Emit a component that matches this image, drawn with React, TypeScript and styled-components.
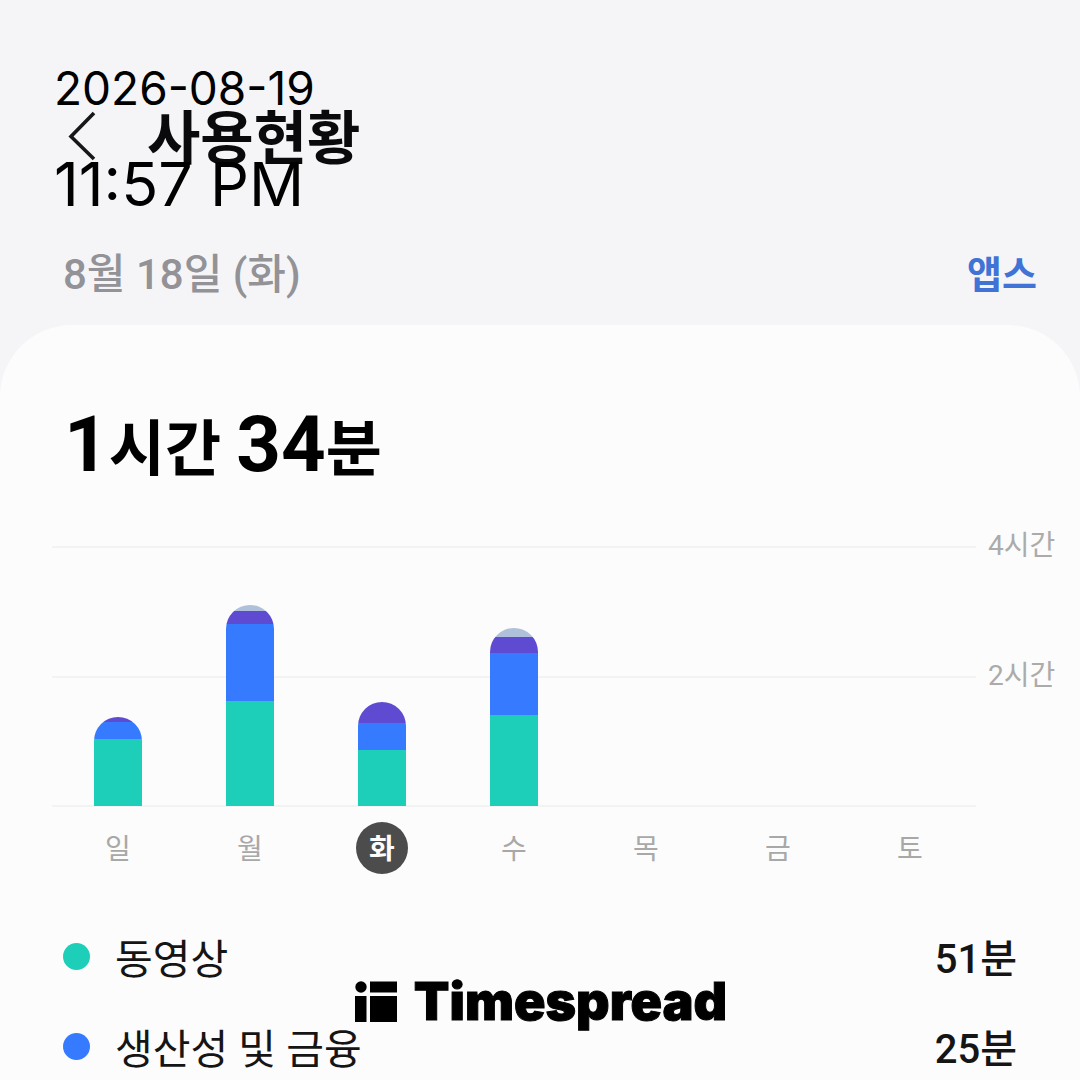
import React from "react";
import styled, { createGlobalStyle } from "styled-components";

const GlobalStyle = createGlobalStyle`
  *, *::before, *::after { box-sizing: border-box; }
  body {
    margin: 0;
    background: #f5f5f8;
    font-family: Roboto, "Noto Sans CJK KR", sans-serif;
    color: #000;
  }
  button { border: 0; padding: 0; background: none; font: inherit; color: inherit; cursor: pointer; }
  h1, p, ul, time { margin: 0; padding: 0; }
`;

const colors = {
  video: "#1dcfb8",
  work: "#367bff",
  social: "#5f4bd1",
  other: "#afc0da",
};

type Category = keyof typeof colors;

const Page = styled.main`
  position: relative;
  display: flex;
  flex-direction: column;
  height: 100vh;
  overflow: hidden;
`;

const Header = styled.header`
  display: flex;
  align-items: center;
  gap: 43px;
  height: 60px;
  margin-top: 106px;
  padding: 0 60px;
`;

const BackButton = styled.button`
  display: flex;
  align-items: center;
  justify-content: center;
  width: 44px;
  height: 60px;
`;

const Title = styled.h1`
  padding-top: 6px;
  font-size: 58px;
  font-weight: 700;
  line-height: 60px;
  color: #0a0a0c;
`;

const DateBar = styled.div`
  display: flex;
  align-items: center;
  justify-content: space-between;
  height: 60px;
  margin: 79px 43px 20px 63px;
`;

const DateLabel = styled.p`
  font-size: 42px;
  font-weight: 500;
  line-height: 60px;
  color: #929297;
`;

const AppsButton = styled.button`
  font-size: 38px;
  font-weight: 700;
  line-height: 60px;
  color: #4073d5;
`;

const Card = styled.section`
  flex: 1;
  min-height: 0;
  padding-top: 80px;
  border-radius: 72px 72px 0 0;
  background: #fcfcfc;
`;

const Total = styled.p`
  height: 80px;
  padding: 0 64px;
  font-size: 61px;
  font-weight: 700;
  line-height: 80px;
`;

const Digits = styled.span`
  font-size: 78px;
  line-height: 80px;
`;

const Chart = styled.div`
  display: grid;
  grid-template-columns: 1fr 92px;
  column-gap: 12px;
  margin-top: 61px;
  padding-left: 52px;
`;

const GridLines = styled.div`
  grid-area: 1 / 1;
  display: grid;
  grid-template-rows: 1fr 1fr;
  height: 261px;
  border-bottom: 2px solid #f3f3f3;
`;

const GridLine = styled.div`
  border-top: 2px solid #f3f3f3;
`;

const Bars = styled.div`
  grid-area: 1 / 1;
  display: grid;
  grid-template-columns: repeat(7, 1fr);
  align-items: end;
  justify-items: center;
  height: 260px;
`;

const Bar = styled.div`
  display: flex;
  flex-direction: column-reverse;
  width: 48px;
  border-radius: 24px 24px 0 0;
  overflow: hidden;
`;

const Segment = styled.div<{ $kind: Category }>`
  background: ${(p) => colors[p.$kind]};
`;

const Scale = styled.div`
  grid-area: 1 / 2;
  display: grid;
  grid-template-rows: 1fr 1fr;
  height: 260px;
`;

const ScaleLabel = styled.span`
  margin-top: -20px;
  font-size: 28px;
  line-height: 40px;
  color: #ababab;
`;

const Days = styled.div`
  grid-area: 2 / 1;
  display: grid;
  grid-template-columns: repeat(7, 1fr);
  justify-items: center;
  margin-top: 15px;
`;

const Day = styled.button<{ $active: boolean }>`
  width: 52px;
  height: 52px;
  padding-top: 4px;
  border-radius: 50%;
  background: ${(p) => (p.$active ? "#4c4c4c" : "transparent")};
  color: ${(p) => (p.$active ? "#fcfcfc" : "#a8a8a8")};
  font-size: 28px;
  font-weight: ${(p) => (p.$active ? 700 : 400)};
  line-height: 48px;
`;

const List = styled.ul`
  margin-top: 37px;
  list-style: none;
`;

const Row = styled.li`
  display: flex;
  align-items: center;
  height: 90px;
  padding: 0 63px;
  font-size: 41px;
  line-height: 60px;
  color: #151515;
`;

const Dot = styled.span<{ $kind: Category }>`
  width: 27px;
  height: 27px;
  margin-right: 25px;
  border-radius: 50%;
  background: ${(p) => colors[p.$kind]};
`;

const Name = styled.span`
  padding-top: 7px;
`;

const Duration = styled.span`
  margin-left: auto;
  padding-top: 7px;
  font-size: 40px;
  font-weight: 500;
`;

const Stamp = styled.div`
  position: absolute;
  top: 60px;
  left: 54px;
  display: flex;
  flex-direction: column;
  gap: 32px;
  font-family: Inter, sans-serif;
  font-variation-settings: "opsz" 14;
  pointer-events: none;
`;

const StampDate = styled.time`
  font-size: 46px;
  line-height: 56px;
`;

const StampTime = styled.time`
  font-size: 61px;
  line-height: 72px;
`;

const Brand = styled.div`
  position: absolute;
  bottom: 50px;
  left: 0;
  right: 0;
  display: flex;
  align-items: center;
  justify-content: center;
  gap: 17px;
  padding-left: 2px;
  font-family: Inter, sans-serif;
  font-size: 52px;
  font-weight: 900;
  line-height: 56px;
  -webkit-text-stroke: 1px #000;
  pointer-events: none;
`;

const days: { name: string; usage: [Category, number][] }[] = [
  { name: "일", usage: [["video", 67], ["work", 17], ["social", 5]] },
  { name: "월", usage: [["video", 105], ["work", 77], ["social", 13], ["other", 6]] },
  { name: "화", usage: [["video", 56], ["work", 27], ["social", 21]] },
  { name: "수", usage: [["video", 91], ["work", 62], ["social", 16], ["other", 9]] },
  { name: "목", usage: [] },
  { name: "금", usage: [] },
  { name: "토", usage: [] },
];

const categories: { name: string; kind: Category; time: string }[] = [
  { name: "동영상", kind: "video", time: "51분" },
  { name: "생산성 및 금융", kind: "work", time: "25분" },
];

export default function App() {
  return (
    <Page lang="ko">
      <GlobalStyle />
      <Header>
        <BackButton aria-label="뒤로">
          <svg width="28" height="50" viewBox="0 0 28 50" fill="none" stroke="#17171a" strokeWidth="3.6">
            <path d="M26 2 3 25.500 26 48" />
          </svg>
        </BackButton>
        <Title>사용현황</Title>
      </Header>
      <DateBar>
        <DateLabel>8월 18일 (화)</DateLabel>
        <AppsButton>앱스</AppsButton>
      </DateBar>
      <Card>
        <Total>
          <Digits>1</Digits>시간 <Digits>34</Digits>분
        </Total>
        <Chart>
          <GridLines>
            <GridLine />
            <GridLine />
          </GridLines>
          <Bars>
            {days.map((day) => (
              <Bar key={day.name}>
                {day.usage.map(([kind, size]) => (
                  <Segment key={kind} $kind={kind} style={{ height: size }} />
                ))}
              </Bar>
            ))}
          </Bars>
          <Scale>
            <ScaleLabel>4시간</ScaleLabel>
            <ScaleLabel>2시간</ScaleLabel>
          </Scale>
          <Days>
            {days.map((day) => (
              <Day key={day.name} $active={day.name === "화"} aria-pressed={day.name === "화"}>
                {day.name}
              </Day>
            ))}
          </Days>
        </Chart>
        <List>
          {categories.map((item) => (
            <Row key={item.kind}>
              <Dot $kind={item.kind} />
              <Name>{item.name}</Name>
              <Duration>{item.time}</Duration>
            </Row>
          ))}
        </List>
      </Card>
      <Stamp>
        <StampDate dateTime="2026-08-19">2026-08-19</StampDate>
        <StampTime dateTime="23:57">11:57 PM</StampTime>
      </Stamp>
      <Brand>
        <svg width="42" height="42" viewBox="0 0 42 42" aria-hidden="true">
          <circle cx="6" cy="6" r="5.700" />
          <rect x="15" y="0.500" width="27" height="11" />
          <rect x="0" y="15" width="11.500" height="26" />
          <rect x="15" y="15" width="27" height="26" />
        </svg>
        <span>Timespread</span>
      </Brand>
    </Page>
  );
}
